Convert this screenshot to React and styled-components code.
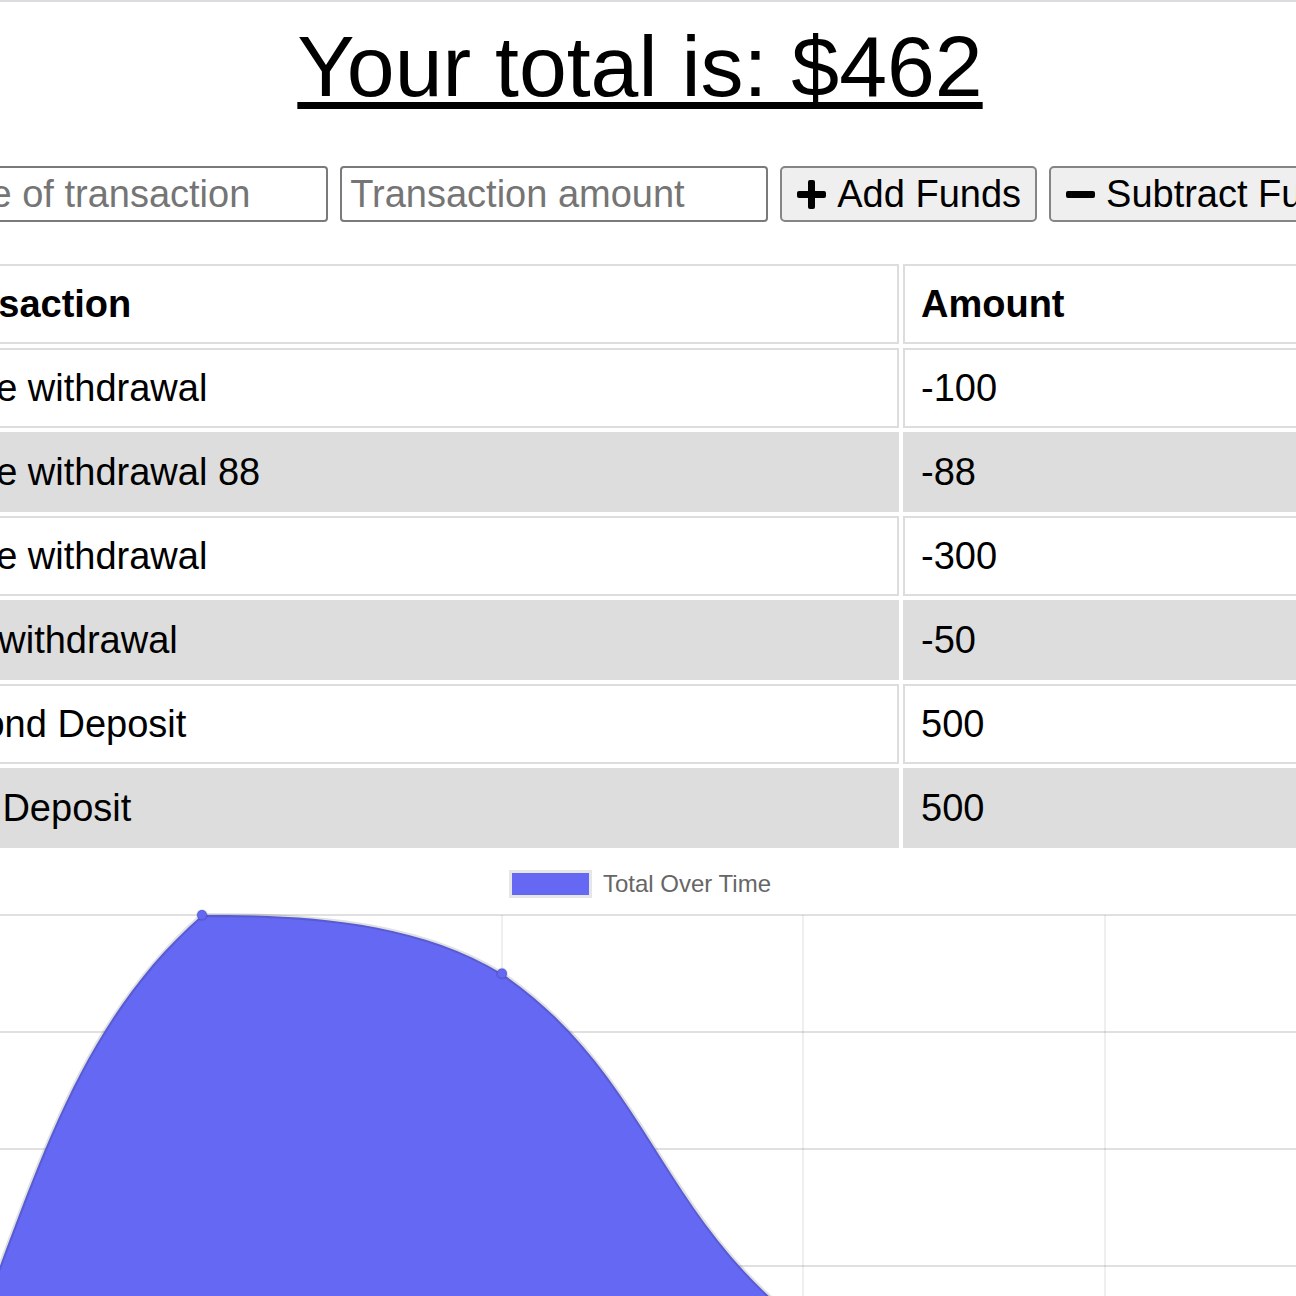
import React from "react";
import styled, { createGlobalStyle } from "styled-components";

const Global = createGlobalStyle`
  html, body { margin: 0; padding: 0; overflow: hidden; background: #fff; }
  * { box-sizing: border-box; }
`;

const Frame = styled.div`
  width: 1296px;
  height: 1296px;
  overflow: hidden;
  border-top: 2px solid #dcdce0;
  font-family: "Liberation Sans", Arial, Helvetica, sans-serif;
  color: #000;
`;

const Page = styled.div`
  width: 1488px;
  margin-left: -104px;
  display: flex;
  flex-direction: column;
  align-items: center;
`;

const Title = styled.h1`
  margin: 14px 0 0;
  font-size: 86px;
  line-height: 100px;
  font-weight: 400;
  text-decoration: underline;
  text-decoration-thickness: 7px;
  text-underline-offset: 6px;
  text-align: center;
`;

const Controls = styled.div`
  margin-top: 50px;
  display: flex;
  justify-content: center;
  gap: 12px;
  width: 100%;
`;

const Field = styled.input`
  width: 428px;
  height: 56px;
  border: 2px solid #7a7a7a;
  border-radius: 4px;
  padding: 0 8px;
  font-family: inherit;
  font-size: 38px;
  color: #000;
  background: #fff;
  &::placeholder { color: #757575; }
`;

const Button = styled.button`
  height: 56px;
  display: flex;
  align-items: center;
  gap: 11px;
  padding: 0 14px 0 15px;
  border: 2px solid #858585;
  border-radius: 5px;
  background: #efefef;
  font-family: inherit;
  font-size: 38px;
  color: #000;
  white-space: nowrap;
`;

const Icon = styled.svg`
  width: 29px;
  height: 29px;
  flex: none;
`;

const Table = styled.table`
  margin-top: 38px;
  width: 1488px;
  table-layout: fixed;
  border-collapse: separate;
  border-spacing: 4px;
  font-size: 38px;
`;

const HeadCell = styled.th`
  height: 80px;
  padding: 0 16px;
  border: 2px solid #dddddd;
  text-align: left;
  font-weight: 700;
  width: ${(p) => (p.$wide ? "999px" : "auto")};
`;

const Row = styled.tr`
  background: ${(p) => (p.$striped ? "#dddddd" : "#ffffff")};
`;

const Cell = styled.td`
  height: 80px;
  padding: 0 16px;
  border: 2px solid #dddddd;
  white-space: nowrap;
`;

const Legend = styled.div`
  margin-top: 18px;
  height: 28px;
  display: flex;
  align-items: center;
  gap: 11px;
  font-size: 24px;
  color: #666;
  font-family: "Liberation Sans", Arial, sans-serif;
`;

const Swatch = styled.span`
  width: 83px;
  height: 28px;
  background: #6468f2;
  border: 3px solid #e6e6e6;
`;

const Plot = styled.svg`
  display: block;
  flex: none;
`;

const PlusIcon = () => (
  <Icon viewBox="0 0 29 29">
    <rect x="11" y="0" width="7" height="29" rx="2" fill="#000" />
    <rect x="0" y="11" width="29" height="7" rx="2" fill="#000" />
  </Icon>
);

const MinusIcon = () => (
  <Icon viewBox="0 0 29 29">
    <rect x="0" y="11" width="29" height="7" rx="2" fill="#000" />
  </Icon>
);

const rows = [
  ["Some withdrawal", "-100"],
  ["Some withdrawal 88", "-88"],
  ["Some withdrawal", "-300"],
  ["Gas withdrawal", "-50"],
  ["Second Deposit", "500"],
  ["First Deposit", "500"],
];

const values = [500, 1000, 950, 650, 562, 462];
const xs = [-99, 202, 502, 803, 1105, 1406];
const top = 915;
const bottom = 1617;
const yOf = (v) => top + (1000 - v) * 1.17;

function buildPath() {
  const pts = values.map((v, i) => ({ x: xs[i], y: yOf(v) }));
  const t = 0.4;
  const cps = pts.map((p, i) => {
    const prev = pts[i - 1] || p;
    const next = pts[i + 1] || p;
    const d01 = Math.hypot(p.x - prev.x, p.y - prev.y);
    const d12 = Math.hypot(next.x - p.x, next.y - p.y);
    let s01 = d01 / (d01 + d12);
    let s12 = d12 / (d01 + d12);
    if (isNaN(s01)) s01 = 0;
    if (isNaN(s12)) s12 = 0;
    const fa = t * s01;
    const fb = t * s12;
    const cap = (y) => Math.min(Math.max(y, top), bottom);
    return {
      prev: { x: p.x - fa * (next.x - prev.x), y: cap(p.y - fa * (next.y - prev.y)) },
      next: { x: p.x + fb * (next.x - prev.x), y: cap(p.y + fb * (next.y - prev.y)) },
    };
  });
  let d = `M ${pts[0].x} ${pts[0].y}`;
  for (let i = 1; i < pts.length; i++) {
    const a = cps[i - 1].next;
    const b = cps[i].prev;
    d += ` C ${a.x} ${a.y} ${b.x} ${b.y} ${pts[i].x} ${pts[i].y}`;
  }
  return { d, pts };
}

const { d: linePath, pts } = buildPath();
const areaPath = `${linePath} L ${xs[xs.length - 1]} ${bottom} L ${xs[0]} ${bottom} Z`;
const hLines = [915, 1032, 1149, 1266, 1383, 1500, 1617];

export default function App() {
  return (
    <>
      <Global />
      <Frame>
        <Page>
          <Title>Your total is: $462</Title>
          <Controls>
            <Field placeholder="Name of transaction" />
            <Field placeholder="Transaction amount" />
            <Button>
              <PlusIcon />
              Add Funds
            </Button>
            <Button>
              <MinusIcon />
              Subtract Funds
            </Button>
          </Controls>
          <Table>
            <thead>
              <tr>
                <HeadCell $wide>Transaction</HeadCell>
                <HeadCell>Amount</HeadCell>
              </tr>
            </thead>
            <tbody>
              {rows.map(([name, amt], i) => (
                <Row key={i} $striped={i % 2 === 1}>
                  <Cell>{name}</Cell>
                  <Cell>{amt}</Cell>
                </Row>
              ))}
            </tbody>
          </Table>
          <Legend>
            <Swatch />
            Total Over Time
          </Legend>
          <Plot width="1488" height="800" viewBox="-104 898 1488 800">
            {hLines.map((y) => (
              <line key={y} x1="-104" x2="1406" y1={y} y2={y} stroke="rgba(0,0,0,0.12)" strokeWidth="2" />
            ))}
            {xs.map((x) => (
              <line key={x} x1={x} x2={x} y1={top} y2={bottom} stroke="rgba(0,0,0,0.13)" strokeWidth="1" />
            ))}
            <path d={areaPath} fill="#6468f2" />
            <path d={linePath} fill="none" stroke="rgba(0,0,0,0.12)" strokeWidth="4" />
            {pts.map((p, i) => (
              <circle key={i} cx={p.x} cy={p.y} r="5" fill="#6468f2" stroke="rgba(0,0,0,0.1)" strokeWidth="2" />
            ))}
          </Plot>
        </Page>
      </Frame>
    </>
  );
}
